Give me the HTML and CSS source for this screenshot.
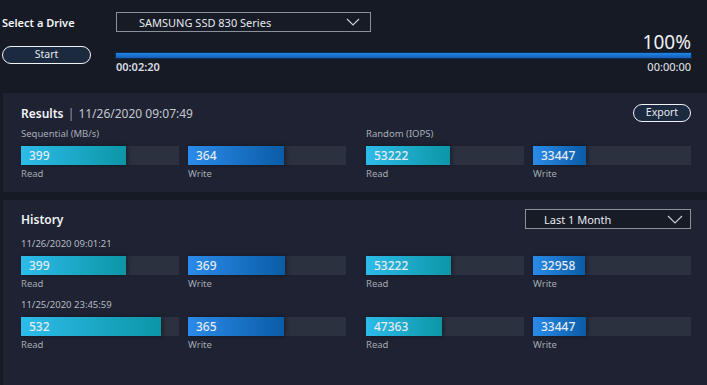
FILE: index.html
```html
<!DOCTYPE html>
<html lang="en">

<head>
    <meta charset="UTF-8">
    <meta name="viewport" content="width=device-width, initial-scale=1.0">
    <title>Performance Benchmark</title>
    <link rel="stylesheet" href="styles.css">
</head>

<body>
    <div id="top">
        <div class="drive-row">
            <span class="drive-label">Select a Drive</span>
            <div class="select drive-select">
                <span>SAMSUNG SSD 830 Series</span>
                <svg width="14" height="8" viewBox="0 0 14 8"><polyline points="1,1 7,7 13,1" fill="none" stroke="#c9ccd2" stroke-width="1.2"/></svg>
            </div>
        </div>
        <div class="run-row">
            <div class="btn start-btn">Start</div>
            <div class="progress">
                <div class="percent">100%</div>
                <div class="progress-bar"></div>
                <div class="times">
                    <span class="elapsed">00:02:20</span>
                    <span class="remain">00:00:00</span>
                </div>
            </div>
        </div>
    </div>

    <!-- 结果 -->
    <div class="panel results">
        <div class="panel-head">
            <div class="title">Results <span class="sep">|</span> <span class="date">11/26/2020 09:07:49</span></div>
            <div class="btn export-btn">Export</div>
        </div>
        <div class="groups">
            <div class="group">
                <div class="group-label">Sequential (MB/s)</div>
                <div class="pair">
                    <div class="item">
                        <div class="track"><div class="fill read" style="width:105px">399</div></div>
                        <div class="cap">Read</div>
                    </div>
                    <div class="item">
                        <div class="track"><div class="fill write" style="width:96px">364</div></div>
                        <div class="cap">Write</div>
                    </div>
                </div>
            </div>
            <div class="group">
                <div class="group-label">Random (IOPS)</div>
                <div class="pair">
                    <div class="item">
                        <div class="track"><div class="fill read" style="width:84px">53222</div></div>
                        <div class="cap">Read</div>
                    </div>
                    <div class="item">
                        <div class="track"><div class="fill write" style="width:53px">33447</div></div>
                        <div class="cap">Write</div>
                    </div>
                </div>
            </div>
        </div>
    </div>

    <!-- 历史 -->
    <div class="panel history">
        <div class="panel-head">
            <div class="title">History</div>
            <div class="select range-select">
                <span>Last 1 Month</span>
                <svg width="16" height="9" viewBox="0 0 16 9"><polyline points="1,1 8,8 15,1" fill="none" stroke="#c9ccd2" stroke-width="1.2"/></svg>
            </div>
        </div>

        <div class="record">
            <div class="date-label">11/26/2020 09:01:21</div>
            <div class="groups">
                <div class="pair">
                    <div class="item">
                        <div class="track"><div class="fill read" style="width:105px">399</div></div>
                        <div class="cap">Read</div>
                    </div>
                    <div class="item">
                        <div class="track"><div class="fill write" style="width:97px">369</div></div>
                        <div class="cap">Write</div>
                    </div>
                </div>
                <div class="pair">
                    <div class="item">
                        <div class="track"><div class="fill read" style="width:85px">53222</div></div>
                        <div class="cap">Read</div>
                    </div>
                    <div class="item">
                        <div class="track"><div class="fill write" style="width:52px">32958</div></div>
                        <div class="cap">Write</div>
                    </div>
                </div>
            </div>
        </div>

        <div class="record">
            <div class="date-label">11/25/2020 23:45:59</div>
            <div class="groups">
                <div class="pair">
                    <div class="item">
                        <div class="track"><div class="fill read" style="width:140px">532</div></div>
                        <div class="cap">Read</div>
                    </div>
                    <div class="item">
                        <div class="track"><div class="fill write" style="width:96px">365</div></div>
                        <div class="cap">Write</div>
                    </div>
                </div>
                <div class="pair">
                    <div class="item">
                        <div class="track"><div class="fill read" style="width:76px">47363</div></div>
                        <div class="cap">Read</div>
                    </div>
                    <div class="item">
                        <div class="track"><div class="fill write" style="width:53px">33447</div></div>
                        <div class="cap">Write</div>
                    </div>
                </div>
            </div>
        </div>
    </div>
</body>

</html>
```

FILE: styles.css
```css
* {
    margin: 0;
    padding: 0;
    box-sizing: border-box;
}

body {
    background: #161a25;
    color: #e6e9ee;
    font-family: "Noto Sans", "Open Sans", sans-serif;
    width: 707px;
    height: 385px;
    overflow: hidden;
}

/* 顶部 */

#top {
    padding: 12px 16px 0 2px;
    height: 93px;
}

.drive-row {
    display: flex;
    align-items: center;
}

.drive-label {
    width: 114px;
    font-size: 11px;
    font-weight: 600;
    color: #f2f4f7;
}

.select {
    display: flex;
    align-items: center;
    justify-content: space-between;
    border: 1.5px solid #8b9099;
    background: #171b26;
    height: 20px;
    font-size: 11px;
    color: #e6e9ee;
}

.drive-select {
    width: 255px;
    padding: 0 10px 0 22px;
}

.run-row {
    display: flex;
}

.btn {
    border: 1.5px solid #f0f2f5;
    border-radius: 10px;
    background: #1c2a3f;
    text-align: center;
    font-size: 10.5px;
    color: #e6e9ee;
}

.start-btn {
    width: 89px;
    height: 18px;
    line-height: 15px;
    margin: 14px 25px 0 0;
}

.progress {
    flex: 1;
}

.percent {
    text-align: right;
    font-size: 19px;
    line-height: 20px;
    color: #eef0f3;
}

.progress-bar {
    height: 5px;
    margin-top: 1px;
    background: linear-gradient(#2383e2, #155fb8);
    box-shadow: 0 0 0 1px #0d2b4f;
}

.times {
    display: flex;
    justify-content: space-between;
    font-size: 11px;
    line-height: 16px;
    margin-top: 1px;
}

.elapsed {
    font-weight: 600;
    color: #d9dde3;
}

.remain {
    color: #e6e9ee;
}

/* 面板 */

.panel {
    background: #1e2232;
    margin-left: 3px;
    padding: 11px 16px 0 18px;
}

.results {
    height: 99px;
}

.history {
    margin-top: 8px;
    height: 185px;
    padding-top: 9px;
}

.panel-head {
    display: flex;
    justify-content: space-between;
    align-items: center;
    height: 18px;
}

.history .panel-head {
    height: 20px;
}

.title {
    font-size: 12px;
    font-weight: 600;
    color: #f2f4f7;
}

.sep {
    font-weight: 400;
    color: #9aa0ab;
    margin: 0 1px;
}

.date {
    font-weight: 400;
    font-size: 12px;
    color: #c3c8d0;
}

.export-btn {
    width: 58px;
    height: 18px;
    line-height: 15px;
}

.range-select {
    width: 166px;
    padding: 0 7px 0 18px;
}

.groups {
    display: flex;
    gap: 20px;
}

.group-label {
    font-size: 9.5px;
    color: #a8aeb8;
    height: 24px;
    line-height: 24px;
}

.pair {
    display: flex;
    gap: 9px;
}

.track {
    width: 158px;
    height: 19px;
    background: #2c3140;
}

.fill {
    height: 19px;
    line-height: 19px;
    padding-left: 8px;
    font-size: 12px;
    font-weight: 500;
    color: #e4ebf2;
    box-shadow: 2px 0 4px rgba(0, 0, 0, 0.35);
    white-space: nowrap;
}

.fill.read {
    background: linear-gradient(to right, #2dbbea, #0c96a6);
}

.fill.write {
    background: linear-gradient(to right, #2b8be9, #0a5ca6);
}

.cap {
    font-size: 9.5px;
    color: #a3a9b3;
    line-height: 18px;
}

.date-label {
    font-size: 9.5px;
    color: #b5bac3;
    height: 24px;
    line-height: 24px;
    margin-top: 3px;
}

.record + .record .date-label {
    margin-top: 0;
}
```
